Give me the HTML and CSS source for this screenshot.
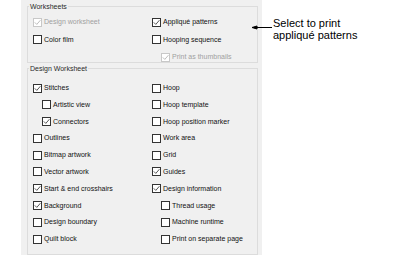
FILE: index.html
```html
<!DOCTYPE html>
<html lang="en">
<head>
    <meta charset="UTF-8">
    <title>Print options</title>
    <link rel="stylesheet" href="styles.css">
</head>
<body>
    <div class="page">
        <div class="panel">
            <fieldset class="group worksheets">
                <legend>Worksheets</legend>
                <div class="grid">
                    <label class="opt disabled"><span class="box"><svg viewBox="0 0 7 7"><polyline points="0.8,3.4 2.8,5.4 6.4,1.2"/></svg></span>Design worksheet</label>
                    <label class="opt"><span class="box"><svg viewBox="0 0 7 7"><polyline points="0.8,3.4 2.8,5.4 6.4,1.2"/></svg></span>Appliqué patterns</label>
                    <label class="opt"><span class="box"></span>Color film</label>
                    <label class="opt"><span class="box"></span>Hooping sequence</label>
                    <span></span>
                    <label class="opt sub disabled"><span class="box"><svg viewBox="0 0 7 7"><polyline points="0.8,3.4 2.8,5.4 6.4,1.2"/></svg></span>Print as thumbnails</label>
                </div>
            </fieldset>

            <fieldset class="group design">
                <legend>Design Worksheet</legend>
                <div class="grid">
                    <label class="opt"><span class="box"><svg viewBox="0 0 7 7"><polyline points="0.8,3.4 2.8,5.4 6.4,1.2"/></svg></span>Stitches</label>
                    <label class="opt"><span class="box"></span>Hoop</label>
                    <label class="opt sub"><span class="box"></span>Artistic view</label>
                    <label class="opt"><span class="box"></span>Hoop template</label>
                    <label class="opt sub"><span class="box"><svg viewBox="0 0 7 7"><polyline points="0.8,3.4 2.8,5.4 6.4,1.2"/></svg></span>Connectors</label>
                    <label class="opt"><span class="box"></span>Hoop position marker</label>
                    <label class="opt"><span class="box"></span>Outlines</label>
                    <label class="opt"><span class="box"></span>Work area</label>
                    <label class="opt"><span class="box"></span>Bitmap artwork</label>
                    <label class="opt"><span class="box"></span>Grid</label>
                    <label class="opt"><span class="box"></span>Vector artwork</label>
                    <label class="opt"><span class="box"><svg viewBox="0 0 7 7"><polyline points="0.8,3.4 2.8,5.4 6.4,1.2"/></svg></span>Guides</label>
                    <label class="opt"><span class="box"><svg viewBox="0 0 7 7"><polyline points="0.8,3.4 2.8,5.4 6.4,1.2"/></svg></span>Start &amp; end crosshairs</label>
                    <label class="opt"><span class="box"><svg viewBox="0 0 7 7"><polyline points="0.8,3.4 2.8,5.4 6.4,1.2"/></svg></span>Design information</label>
                    <label class="opt"><span class="box"><svg viewBox="0 0 7 7"><polyline points="0.8,3.4 2.8,5.4 6.4,1.2"/></svg></span>Background</label>
                    <label class="opt sub"><span class="box"></span>Thread usage</label>
                    <label class="opt"><span class="box"></span>Design boundary</label>
                    <label class="opt sub"><span class="box"></span>Machine runtime</label>
                    <label class="opt"><span class="box"></span>Quilt block</label>
                    <label class="opt sub"><span class="box"></span>Print on separate page</label>
                </div>
            </fieldset>
        </div>

        <div class="callout">
            <svg class="arrow" viewBox="0 0 20 5" width="20" height="5">
                <polygon points="0,2.5 5,1 5,4"/>
                <line x1="4" y1="2.5" x2="20" y2="2.5"/>
            </svg>
            <p>Select to print<br>appliqué patterns</p>
        </div>
    </div>
</body>
</html>
```

FILE: styles.css
```css
body {
    margin: 0;
    background: #fff;
    font-family: "Liberation Sans", Arial, sans-serif;
}
.page {
    display: flex;
    align-items: flex-start;
    padding-left: 21px;
}
.panel {
    width: 241px;
    height: 255px;
    box-sizing: border-box;
    background: #f0f0f0;
    padding: 2px 4px 0 6px;
}
.group {
    margin: 0;
    border: 1px solid #dcdcdc;
    padding: 6px 0 0 5px;
    font-size: 7px;
    color: #111;
}
.group legend {
    padding: 0 1px;
    margin-left: -4px;
    line-height: 9px;
    color: #2a2a2a;
}
.grid {
    display: grid;
    grid-template-columns: 119px 1fr;
    row-gap: 7.5px;
}
.design {
    margin-top: 0.5px;
    padding-top: 10.5px;
    padding-bottom: 10px;
}
.design .grid {
    row-gap: 6.8px;
}
.opt {
    display: flex;
    align-items: center;
    gap: 2px;
    height: 10px;
    line-height: 10px;
    white-space: nowrap;
}
.opt.sub {
    padding-left: 9px;
}
.box {
    display: flex;
    align-items: center;
    justify-content: center;
    width: 9px;
    height: 9px;
    box-sizing: border-box;
    border: 1px solid #333;
    background: #fff;
}
.box svg {
    width: 7px;
    height: 7px;
    fill: none;
    stroke: #444;
    stroke-width: 0.9;
}
.disabled {
    color: #a0a0a0;
}
.disabled .box {
    border-color: #c8c8c8;
}
.disabled .box svg {
    stroke: #b5b5b5;
}
.callout {
    display: flex;
    align-items: flex-start;
    margin-left: -10px;
    padding-top: 18px;
}
.arrow {
    margin-top: 6.5px;
    fill: #000;
    stroke: #000;
    stroke-width: 1;
}
.callout p {
    margin: 0 0 0 1px;
    font-size: 11px;
    line-height: 11.5px;
    color: #000;
}
```
